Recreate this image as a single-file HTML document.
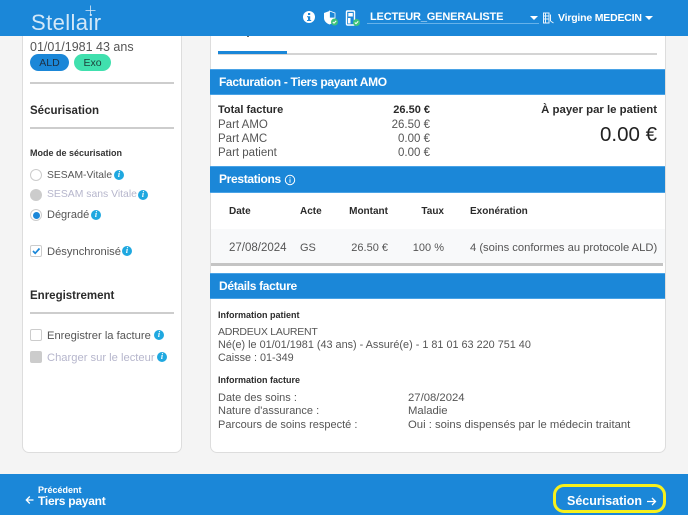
<!DOCTYPE html>
<html lang="fr">
<head>
<meta charset="utf-8">
<title>Stellair</title>
<style>
html,body{margin:0;padding:0}
body{width:688px;height:515px;position:relative;overflow:hidden;background:#f4f4f4;font-family:"Liberation Sans",sans-serif;color:#555}
.a{position:absolute;white-space:nowrap}
.t{position:absolute;white-space:nowrap;font-size:11px;line-height:14px;color:#555}
.b{font-weight:bold;color:#2b2b2b}
.r{text-align:right}
.h{position:absolute;left:210px;width:455px;background:#1b87d8;border-top:1px solid #4aa3e6;border-bottom:1px solid #4aa3e6;box-sizing:border-box;color:#fff;font-weight:bold;font-size:12px;letter-spacing:-.32px;padding-left:9px}
.rule{position:absolute;left:30px;width:144px;height:2px;background:#cdcdcd}
.i{position:absolute;width:10px;height:10px;border-radius:50%;background:#1fa8e0;color:#fff;font:italic bold 8px/10px "Liberation Serif",serif;text-align:center}
.rad{position:absolute;left:30px;width:10px;height:10px;border:1px solid #ccc;border-radius:50%;background:#fff}
.chk{position:absolute;left:30px;width:10px;height:10px;border:1px solid #ccc;border-radius:2px;background:#fff}
.dis{color:#b6b6cc}
</style>
</head>
<body>
<!-- cards -->
<div class="a" style="left:22px;top:20px;width:160px;height:433px;box-sizing:border-box;background:#fff;border:1px solid #ddd;border-radius:7px"></div>
<div class="a" style="left:210px;top:20px;width:456px;height:433px;box-sizing:border-box;background:#fff;border:1px solid #ddd;border-radius:7px"></div>

<!-- header -->
<div class="a" style="left:0;top:0;width:688px;height:36px;background:#1b87d8"></div>
<div class="a" style="left:31px;top:10px;font-size:22px;line-height:26px;color:#d3e8f8;letter-spacing:.4px">Stellair</div>
<svg class="a" style="left:85px;top:5px" width="11" height="11" viewBox="0 0 11 11"><path d="M5.500 0.500V10.500M0.500 5.500H10.500" stroke="#dcecf9" stroke-width=".8"/></svg>

<svg class="a" style="left:302px;top:10px" width="14" height="14" viewBox="0 0 14 14"><circle cx="7" cy="7" r="6" fill="#fff"/><rect x="6" y="3" width="2.200" height="2" fill="#1b87d8"/><path d="M5 6.200H8.200V10H9.200V11H5V10H6V7.200H5Z" fill="#1b87d8"/></svg>
<svg class="a" style="left:323px;top:10px" width="17" height="17" viewBox="0 0 17 17"><path d="M6.500 1L12 3V8C12 11 9.500 13.500 6.500 14.500C3.500 13.500 1 11 1 8V3Z" fill="#fff"/><path d="M6.500 1L12 3V8H6.500Z" fill="#1b87d8" stroke="#fff" stroke-width=".8"/><circle cx="11.500" cy="12" r="3.500" fill="#3ec47a"/><path d="M9.800 12L11 13.200L13.200 10.900" stroke="#fff" fill="none"/></svg>
<svg class="a" style="left:345px;top:10px" width="16" height="18" viewBox="0 0 16 18"><rect x="1.500" y="1" width="8" height="14" rx="1" fill="#1b87d8" stroke="#fff" stroke-width="1.400"/><rect x="3.300" y="3" width="4.500" height="3.500" fill="#fff"/><rect x="3" y="8" width="2.500" height="5.500" fill="#fff"/><circle cx="11.500" cy="12.500" r="3.500" fill="#3ec47a"/><path d="M9.800 12.500L11 13.700L13.200 11.400" stroke="#fff" fill="none"/></svg>

<div class="a" style="left:370px;top:10px;font-size:11px;line-height:14px;font-weight:bold;color:#fff;letter-spacing:-.16px">LECTEUR_GENERALISTE</div>
<div class="a" style="left:367px;top:23px;width:172px;height:1px;background:#66b2ea"></div>
<div class="a" style="left:530px;top:16px;width:0;height:0;border-left:4px solid transparent;border-right:4px solid transparent;border-top:4px solid #fff"></div>
<svg class="a" style="left:542px;top:12px" width="13" height="12" viewBox="0 0 13 12"><path d="M1.500 1H7V11H1.500ZM3.500 1V11M1.500 4H7M1.500 7H7M8.500 2.500V9M8.500 9L11.500 11" fill="none" stroke="#e8f3fc" stroke-width="1"/></svg>
<div class="a" style="left:558px;top:11px;font-size:10.500px;line-height:14px;font-weight:bold;color:#fff;letter-spacing:-.2px">Virgine MEDECIN</div>
<div class="a" style="left:645px;top:16px;width:0;height:0;border-left:4px solid transparent;border-right:4px solid transparent;border-top:4px solid #fff"></div>

<!-- left panel -->
<div class="t" style="left:30px;top:39px;font-size:12.500px;line-height:16px">01/01/1981 43 ans</div>
<div class="a" style="left:30px;top:54px;width:39px;height:17px;border-radius:9px;background:#1b87d8;color:#1d3145;font-size:10.500px;line-height:18px;text-align:center">ALD</div>
<div class="a" style="left:74px;top:54px;width:37px;height:17px;border-radius:9px;background:#40e0ae;color:#1d3f3a;font-size:10.500px;line-height:18px;text-align:center">Exo</div>
<div class="rule" style="top:82px"></div>
<div class="t b" style="left:30px;top:104px;font-size:11.500px">Sécurisation</div>
<div class="rule" style="top:127px"></div>
<div class="t b" style="left:30px;top:146px;font-size:9px;color:#333">Mode de sécurisation</div>

<div class="rad" style="top:169px"></div>
<div class="t" style="left:47px;top:169px;font-size:10.300px">SESAM-Vitale</div><div class="i" style="left:114px;top:170px">i</div>
<div class="rad" style="top:189px;background:#ccc"></div>
<div class="t dis" style="left:47px;top:188px;font-size:10.400px">SESAM sans Vitale</div><div class="i" style="left:138px;top:190px">i</div>
<div class="rad" style="top:209px"></div><div class="a" style="left:32.500px;top:211.500px;width:7px;height:7px;border-radius:50%;background:#1b87d8"></div>
<div class="t" style="left:47px;top:208px">Dégradé</div><div class="i" style="left:91px;top:210px">i</div>
<div class="chk" style="top:245px"></div>
<svg class="a" style="left:30px;top:245px" width="12" height="12" viewBox="0 0 12 12"><path d="M3 6L5.200 8.300L9.500 3.500" fill="none" stroke="#1b87d8" stroke-width="1.700"/></svg>
<div class="t" style="left:47px;top:245px;font-size:11.200px">Désynchronisé</div><div class="i" style="left:122px;top:246px">i</div>

<div class="t b" style="left:30px;top:289px;font-size:11.500px">Enregistrement</div>
<div class="rule" style="top:312px"></div>
<div class="chk" style="top:329px"></div>
<div class="t" style="left:47px;top:329px;font-size:11.200px">Enregistrer la facture</div><div class="i" style="left:154px;top:330px">i</div>
<div class="chk" style="top:351px;background:#ccc"></div>
<div class="t dis" style="left:47px;top:351px;font-size:11.200px">Charger sur le lecteur</div><div class="i" style="left:157px;top:352px">i</div>

<!-- tabs -->
<div class="a" style="left:247px;top:36px;width:2px;height:1px;background:#666"></div>
<div class="a" style="left:218px;top:53px;width:439px;height:2px;background:#d4d4d4"></div>
<div class="a" style="left:218px;top:51px;width:69px;height:3px;background:#1b87d8"></div>

<!-- facturation -->
<div class="h" style="top:69px;height:26px;line-height:24px">Facturation - Tiers payant AMO</div>
<div class="t b" style="left:218px;top:103px;font-size:11px">Total facture</div>
<div class="t b r" style="left:370px;top:103px;width:60px;font-size:11px">26.50 €</div>
<div class="t" style="left:218px;top:118px;font-size:11.500px">Part AMO</div><div class="t r" style="left:370px;top:118px;width:60px;font-size:11.500px">26.50 €</div>
<div class="t" style="left:218px;top:132px;font-size:11.500px">Part AMC</div><div class="t r" style="left:370px;top:132px;width:60px;font-size:11.500px">0.00 €</div>
<div class="t" style="left:218px;top:146px;font-size:11.500px">Part patient</div><div class="t r" style="left:370px;top:146px;width:60px;font-size:11.500px">0.00 €</div>
<div class="t b r" style="left:497px;top:103px;width:160px;font-size:11.400px">À payer par le patient</div>
<div class="t r" style="left:557px;top:123px;width:100px;font-size:20.500px;line-height:24px;color:#222">0.00 €</div>

<!-- prestations -->
<div class="h" style="top:166px;height:27px;line-height:25px">Prestations</div>
<svg class="a" style="left:284px;top:174px" width="12" height="12" viewBox="0 0 12 12"><circle cx="6" cy="6" r="4.700" fill="none" stroke="#fff" stroke-width="1"/><path d="M6 5.300V8.700M6 3.300V4.400" stroke="#fff" stroke-width="1"/></svg>
<div class="t b" style="left:229px;top:205px;font-size:10px">Date</div>
<div class="t b" style="left:300px;top:205px;font-size:10px">Acte</div>
<div class="t b r" style="left:328px;top:205px;width:60px;font-size:10px">Montant</div>
<div class="t b r" style="left:404px;top:205px;width:40px;font-size:10px">Taux</div>
<div class="t b" style="left:470px;top:205px;font-size:10px">Exonération</div>
<div class="a" style="left:211px;top:229px;width:454px;height:34px;background:#f8f9fa"></div>
<div class="t" style="left:229px;top:241px;font-size:11.500px">27/08/2024</div>
<div class="t" style="left:300px;top:241px">GS</div>
<div class="t r" style="left:328px;top:241px;width:60px">26.50 €</div>
<div class="t r" style="left:404px;top:241px;width:40px">100 %</div>
<div class="t" style="left:470px;top:241px;font-size:11.200px">4 (soins conformes au protocole ALD)</div>
<div class="a" style="left:211px;top:263px;width:452px;height:3px;background:#c4c4c4"></div>

<!-- details -->
<div class="h" style="top:273px;height:26px;line-height:24px">Détails facture</div>
<div class="t b" style="left:218px;top:308px;font-size:9px">Information patient</div>
<div class="t" style="left:218px;top:325px;font-size:10.500px;letter-spacing:-.25px">ADRDEUX LAURENT</div>
<div class="t" style="left:218px;top:338px;font-size:10.850px">Né(e) le 01/01/1981 (43 ans) - Assuré(e) - 1 81 01 63 220 751 40</div>
<div class="t" style="left:218px;top:351px;font-size:10.800px">Caisse : 01-349</div>
<div class="t b" style="left:218px;top:373px;font-size:9px">Information facture</div>
<div class="t" style="left:218px;top:391px">Date des soins :</div><div class="t" style="left:408px;top:391px;font-size:11.300px">27/08/2024</div>
<div class="t" style="left:218px;top:404px">Nature d'assurance :</div><div class="t" style="left:408px;top:404px;font-size:11.300px">Maladie</div>
<div class="t" style="left:218px;top:418px">Parcours de soins respecté :</div><div class="t" style="left:408px;top:418px;font-size:11.300px">Oui : soins dispensés par le médecin traitant</div>

<!-- footer -->
<div class="a" style="left:0;top:474px;width:688px;height:41px;background:#1b87d8"></div>
<div class="a" style="left:38px;top:485px;font-size:9px;line-height:11px;font-weight:bold;color:#fff">Précédent</div>
<div class="a" style="left:38px;top:494px;font-size:12px;line-height:15px;font-weight:bold;color:#fff;letter-spacing:-.25px">Tiers payant</div>
<svg class="a" style="left:25px;top:495px" width="10" height="10" viewBox="0 0 10 10"><path d="M8.500 5H1.500M4.800 1.500L1.300 5L4.800 8.500" fill="none" stroke="#fff" stroke-width="1.300"/></svg>
<div class="a" style="left:553px;top:484px;width:113px;height:29px;box-sizing:border-box;border:3px solid #f7f01c;border-radius:11px"></div>
<div class="a" style="left:567px;top:494px;font-size:12.500px;line-height:15px;font-weight:bold;color:#fff">Sécurisation</div>
<svg class="a" style="left:646px;top:496px" width="11" height="11" viewBox="0 0 11 11"><path d="M1 5.500H9.500M6 2L9.500 5.500L6 9" fill="none" stroke="#fff" stroke-width="1.300"/></svg>
</body>
</html>
